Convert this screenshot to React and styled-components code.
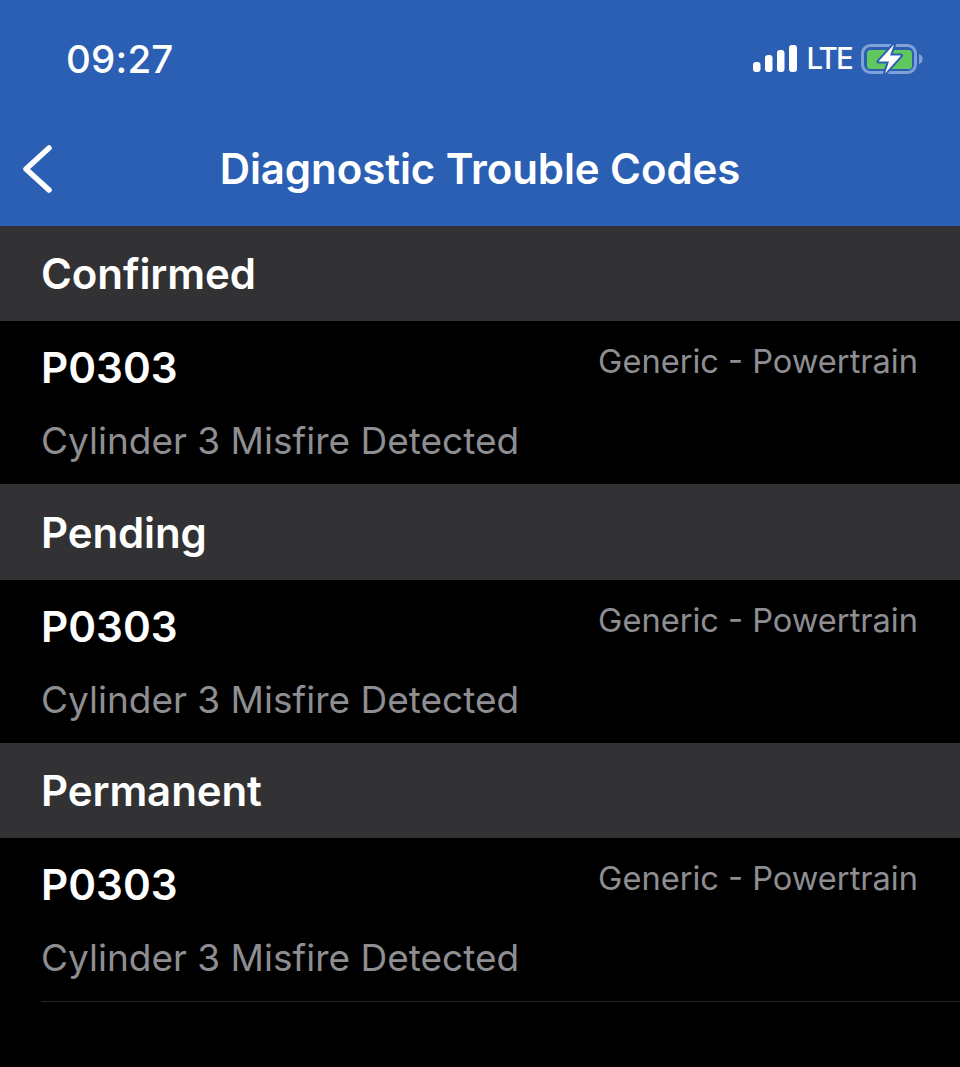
import React from "react";
import styled, { createGlobalStyle } from "styled-components";

const GlobalStyle = createGlobalStyle`
  html, body {
    margin: 0;
    padding: 0;
    background: #000;
  }
  * {
    box-sizing: border-box;
  }
`;

const Screen = styled.div`
  width: 960px;
  height: 1067px;
  overflow: hidden;
  background: #000;
  font-family: Inter, "Liberation Sans", sans-serif;
`;

const Header = styled.header`
  height: 226px;
  background: #2b5fb3;
  color: #fff;
`;

const StatusBar = styled.div`
  height: 120px;
  display: flex;
  align-items: center;
  justify-content: space-between;
  padding: 0 37px 3px 66px;
`;

const Time = styled.div`
  font-size: 38.5px;
  font-weight: 500;
  letter-spacing: 0.2px;
`;

const StatusIcons = styled.div`
  display: flex;
  align-items: center;
  gap: 9px;
`;

const Lte = styled.span`
  font-size: 29.5px;
  font-weight: 500;
  line-height: 1;
  letter-spacing: -1.8px;
`;

const NavBar = styled.div`
  height: 106px;
  display: grid;
  grid-template-columns: 1fr auto 1fr;
  align-items: center;
  padding: 0 22px 9px;
`;

const Title = styled.h1`
  margin: 0;
  font-size: 42px;
  font-weight: 600;
  letter-spacing: -0.08px;
`;

const SectionHeader = styled.div`
  height: ${(props) => props.$height}px;
  display: flex;
  align-items: center;
  padding: 0 41px;
  background: #323234;
  color: #fff;
  font-size: 42px;
  font-weight: 600;
  letter-spacing: -0.1px;
`;

const Row = styled.div`
  height: ${(props) => (props.$last ? 164 : 163)}px;
  margin-left: 41px;
  padding: 22px 42px 0 0;
  border-bottom: ${(props) => (props.$last ? "1px solid #262628" : "none")};
`;

const RowTop = styled.div`
  display: flex;
  justify-content: space-between;
  align-items: flex-start;
`;

const Code = styled.div`
  color: #fff;
  font-size: 42.2px;
  font-weight: 600;
  line-height: 50px;
`;

const Category = styled.div`
  color: #8e8e92;
  font-size: 32.6px;
  font-weight: 400;
  line-height: 36px;
`;

const Description = styled.div`
  margin-top: 26px;
  color: #8e8e92;
  font-size: 37px;
  font-weight: 400;
  line-height: 44px;
`;

const SignalIcon = () => (
  <svg width="44" height="27" viewBox="0 0 44 27">
    <rect x="0" y="17" width="7.5" height="10" rx="3" fill="#fff" />
    <rect x="12" y="10" width="7.5" height="17" rx="3" fill="#fff" />
    <rect x="24" y="5" width="7.5" height="22" rx="3" fill="#fff" />
    <rect x="36" y="0" width="8" height="27" rx="3" fill="#fff" />
  </svg>
);

const BatteryIcon = () => (
  <svg width="62" height="30" viewBox="0 0 62 30">
    <rect x="1.5" y="1.5" width="53" height="27" rx="8" fill="none" stroke="#7ea0d6" strokeWidth="3" />
    <rect x="6" y="6" width="45" height="19" rx="3.5" fill="#5fc85f" />
    <path d="M58 10 C61 11 61.5 13 61.5 15 C61.5 17 61 19 58 20 Z" fill="#7ea0d6" />
    <path
      d="M33 0.5 L17.5 17.5 L28 17.5 L24 29.5 L40 11.5 L29 11.5 Z"
      fill="#fff"
      stroke="#2b5fb3"
      strokeWidth="4"
      strokeLinejoin="round"
      paintOrder="stroke"
    />
  </svg>
);

const BackIcon = () => (
  <svg width="30" height="50" viewBox="0 0 30 50">
    <path
      d="M27 4 L4 25 L27 46"
      fill="none"
      stroke="#fff"
      strokeWidth="5.5"
      strokeLinecap="round"
      strokeLinejoin="round"
    />
  </svg>
);

const sections = [
  { name: "Confirmed", height: 95 },
  { name: "Pending", height: 96 },
  { name: "Permanent", height: 95 },
];

export default function App() {
  return (
    <>
      <GlobalStyle />
      <Screen>
        <Header>
          <StatusBar>
            <Time>09:27</Time>
            <StatusIcons>
              <SignalIcon />
              <Lte>LTE</Lte>
              <BatteryIcon />
            </StatusIcons>
          </StatusBar>
          <NavBar>
            <BackIcon />
            <Title>Diagnostic Trouble Codes</Title>
          </NavBar>
        </Header>
        {sections.map((section, i) => (
          <React.Fragment key={section.name}>
            <SectionHeader $height={section.height}>{section.name}</SectionHeader>
            <Row $last={i === sections.length - 1}>
              <RowTop>
                <Code>P0303</Code>
                <Category>Generic - Powertrain</Category>
              </RowTop>
              <Description>Cylinder 3 Misfire Detected</Description>
            </Row>
          </React.Fragment>
        ))}
      </Screen>
    </>
  );
}
